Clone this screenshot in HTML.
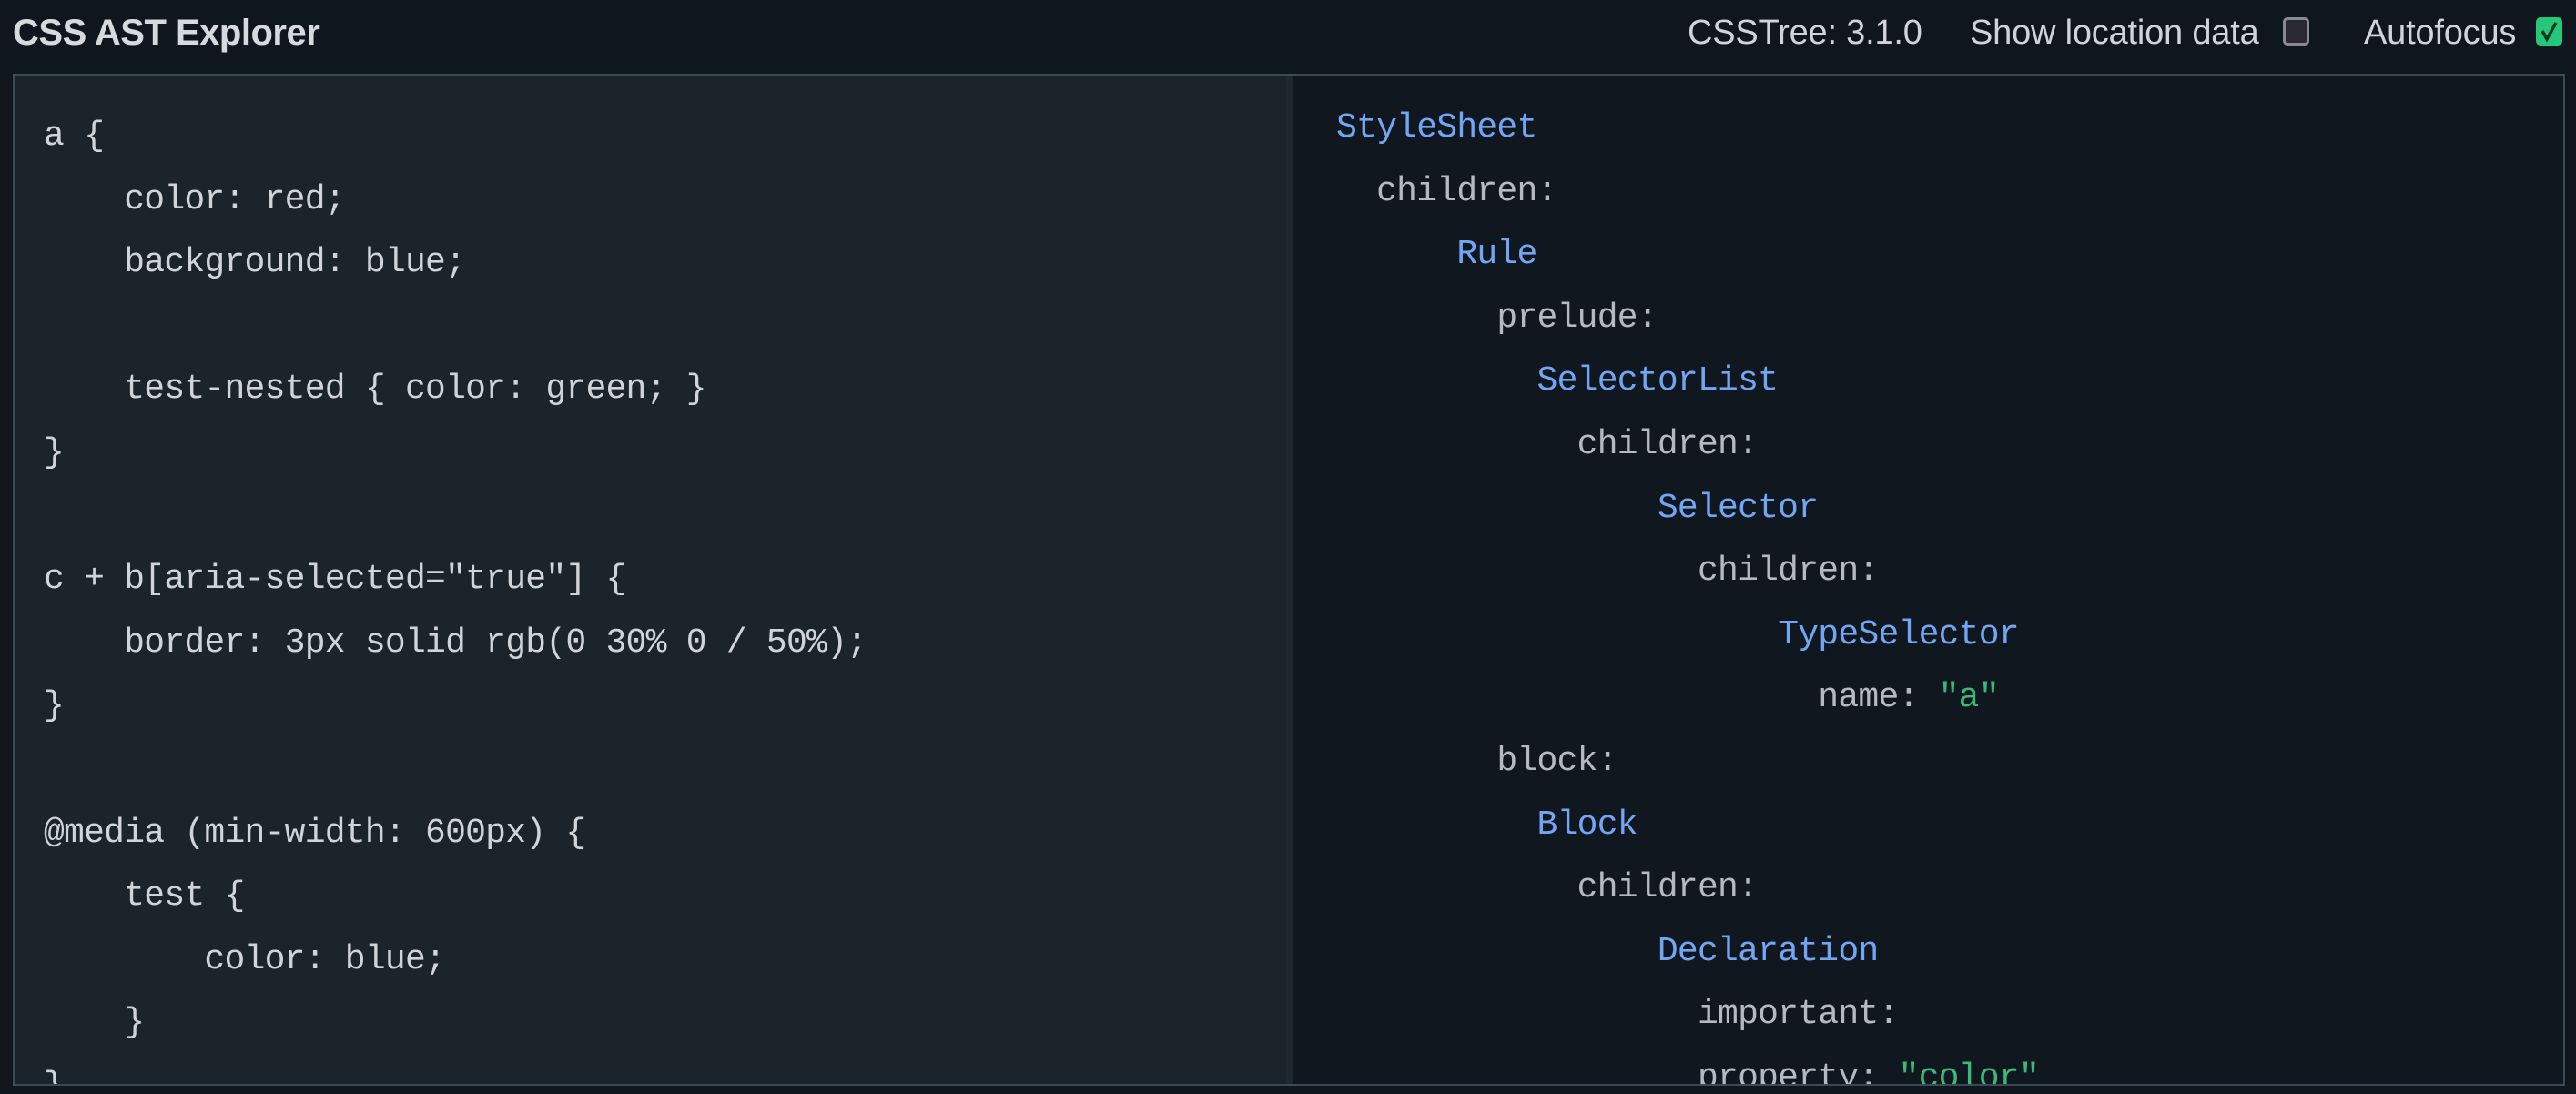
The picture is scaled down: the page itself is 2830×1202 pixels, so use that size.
<!DOCTYPE html>
<html><head><meta charset="utf-8"><style>
html,body{margin:0;padding:0;width:2830px;height:1202px;background:#10161d;overflow:hidden;font-family:"Liberation Sans",sans-serif;}
.t{position:absolute;white-space:pre;}
#title{left:14px;top:13px;font-size:40px;font-weight:bold;color:#d6dadd;line-height:46px;letter-spacing:-0.5px;}
.h{top:13px;font-size:38px;color:#d0d4d8;line-height:46px;letter-spacing:-0.2px;}
.cb{position:absolute;top:19px;width:29px;height:31px;border-radius:5px;box-sizing:border-box;}
#panel{position:absolute;left:14px;top:81px;width:2804px;height:1112px;border:2px solid #394b54;box-sizing:border-box;overflow:hidden;background:#10171e;}
#left{position:absolute;left:0;top:0;width:1397px;height:100%;background:#1b242a;}
#strip{position:absolute;left:1397px;top:0;width:7px;height:100%;background:#1e282e;}
pre{margin:0;position:absolute;font-family:"Liberation Mono",monospace;font-size:38px;line-height:69.6px;letter-spacing:-0.75px;}
#code{left:32px;top:32px;color:#d0d4d8;}
#tree{left:1452px;top:23px;color:#b4bac0;}
.b{color:#72a6f4;}
.g{color:#3bb97a;}
</style></head><body>
<div id="title" class="t">CSS AST Explorer</div>
<div class="t h" style="left:1854px">CSSTree: 3.1.0</div>
<div class="t h" style="left:2164px">Show location data</div>
<div class="cb" style="left:2508px;background:#2a2833;border:3px solid #8a8a96;"></div>
<div class="t h" style="left:2597px">Autofocus</div>
<div class="cb" style="left:2786px;background:#25c77a;"><svg width="29" height="31" viewBox="0 0 29 31"><path d="M7 15 L12 24 L22 6" fill="none" stroke="#0d3a1f" stroke-width="3.5"/></svg></div>
<div id="panel">
<div id="left"></div><div id="strip"></div>
<pre id="code">a {
    color: red;
    background: blue;

    test-nested { color: green; }
}

c + b[aria-selected="true"] {
    border: 3px solid rgb(0 30% 0 / 50%);
}

@media (min-width: 600px) {
    test {
        color: blue;
    }
}</pre>
<pre id="tree"><span class="b">StyleSheet</span>
  children:
      <span class="b">Rule</span>
        prelude:
          <span class="b">SelectorList</span>
            children:
                <span class="b">Selector</span>
                  children:
                      <span class="b">TypeSelector</span>
                        name: <span class="g">"a"</span>
        block:
          <span class="b">Block</span>
            children:
                <span class="b">Declaration</span>
                  important:
                  property: <span class="g">"color"</span></pre>
</div>
</body></html>
